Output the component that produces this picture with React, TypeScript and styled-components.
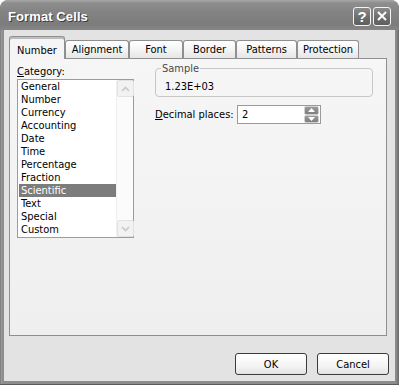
import React from 'react';
import styled, { createGlobalStyle } from 'styled-components';

const GlobalStyle = createGlobalStyle`
  html, body { margin: 0; padding: 0; background: #ffffff; }
  body {
    font-family: "DejaVu Sans Condensed", "Liberation Sans", sans-serif;
    font-size: 11px;
    color: #000;
  }
  * { box-sizing: border-box; }
`;

const Window = styled.div`
  width: 399px;
  height: 385px;
  display: flex;
  flex-direction: column;
  background: linear-gradient(90deg, #6e6e6e 0, #9a9a9a 1px, #8c8c8c 3px, #8c8c8c 396px, #6a6a6a 399px);
  border-radius: 8px 8px 0 0;
  overflow: hidden;
  border-bottom: 1px solid #5a5a5a;
`;

const TitleBar = styled.div`
  height: 30px;
  flex: none;
  display: flex;
  align-items: center;
  padding: 2px 8px 0 8px;
  background: linear-gradient(180deg, #a8a8a8 0, #8e8e8e 3px, #838383 12px, #7c7c7c 24px, #868686 30px);
  border-radius: 8px 8px 0 0;
`;

const Title = styled.div`
  flex: 1;
  font-family: "Liberation Sans", Arial, sans-serif;
  font-weight: bold;
  font-size: 13px;
  color: #ffffff;
  text-shadow: 1px 1px 0 #3c3c3c;
  letter-spacing: 0.1px;
`;

const TitleButtons = styled.div`
  display: flex;
  gap: 2px;
`;

const TitleButton = styled.div`
  width: 18px;
  height: 19px;
  border: 1px solid #f4f4f4;
  border-radius: 3px;
  background: linear-gradient(180deg, #8a8a8a 0, #6c6c6c 60%, #5e5e5e 100%);
  display: flex;
  align-items: center;
  justify-content: center;
  color: #fff;
  font-family: "Liberation Sans", Arial, sans-serif;
  font-weight: bold;
  font-size: 15px;
`;

const Body = styled.div`
  flex: 1;
  margin: 0 4px 3px 4px;
  background: #e3e3e3;
  display: flex;
  flex-direction: column;
  padding-top: 6px;
`;

const TabStrip = styled.div`
  height: 23px;
  display: flex;
  align-items: flex-end;
  padding-left: 5px;
`;

const Tab = styled.div<{ $w: number; $active?: boolean }>`
  position: relative;
  z-index: ${p => (p.$active ? 2 : 1)};
  width: ${p => p.$w}px;
  height: ${p => (p.$active ? 23 : 18)}px;
  margin-bottom: ${p => (p.$active ? 0 : 1)}px;
  padding-top: ${p => (p.$active ? 4 : 0)}px;
  display: flex;
  align-items: center;
  justify-content: center;
  border: 1px solid #8f8f8f;
  border-bottom: none;
  border-radius: 3px 3px 0 0;
  background: ${p =>
    p.$active
      ? '#f5f5f5'
      : 'linear-gradient(180deg, #ffffff 0, #f4f4f4 50%, #e6e6e6 100%)'};
  box-shadow: ${p => (p.$active ? 'inset 0 2px 0 #bdbdbd' : 'none')};
`;

const Panel = styled.div`
  margin: -1px 8px 0 5px;
  height: 278px;
  border: 1px solid #8f8f8f;
  background: linear-gradient(180deg, #f6f6f6 0, #efefef 100%);
  display: flex;
  padding: 3px 0 0 7px;
  gap: 21px;
`;

const LeftColumn = styled.div`
  width: 117px;
  display: flex;
  flex-direction: column;
  padding-top: 3px;
`;

const Label = styled.div`
  line-height: 13px;
  height: 13px;
  white-space: nowrap;
`;

const ListBox = styled.div`
  margin-top: 1px;
  height: 159px;
  border: 1px solid #9c9c9c;
  background: #ffffff;
  display: flex;
`;

const ListItems = styled.div`
  flex: 1;
  padding-left: 1px;
`;

const ListItem = styled.div<{ $selected?: boolean }>`
  height: 13px;
  line-height: 13px;
  padding-left: 2px;
  white-space: nowrap;
  background: ${p => (p.$selected ? '#7c7c7c' : 'transparent')};
  color: ${p => (p.$selected ? '#ffffff' : '#000000')};
`;

const ScrollBar = styled.div`
  width: 17px;
  display: flex;
  flex-direction: column;
  justify-content: space-between;
  background: #fbfbfb;
  border-left: 1px solid #f0f0f0;
`;

const ScrollButton = styled.div`
  width: 17px;
  height: 17px;
  border: 1px solid #e2e2e2;
  border-radius: 2px;
  background: #f2f2f2;
  display: flex;
  align-items: center;
  justify-content: center;
`;

const RightColumn = styled.div`
  width: 218px;
  display: flex;
  flex-direction: column;
`;

const GroupBox = styled.fieldset`
  margin: 0;
  padding: 5px 4px 3px 9px;
  border: 1px solid #c6c6c6;
  border-radius: 4px;
  min-width: 0;
`;

const GroupLegend = styled.legend`
  margin-left: -4px;
  padding: 0 1px;
  line-height: 13px;
  color: #4a4a4a;
`;

const SampleValue = styled.div`
  line-height: 13px;
  height: 13px;
`;

const FieldRow = styled.div`
  margin-top: 8px;
  display: flex;
  align-items: center;
`;

const FieldLabel = styled.div`
  width: 82px;
  line-height: 13px;
  white-space: nowrap;
`;

const SpinInput = styled.div`
  width: 84px;
  height: 19px;
  border: 1px solid #9a9a9a;
  background: #ffffff;
  display: flex;
  align-items: center;
  padding: 0 1px 0 4px;
`;

const SpinValue = styled.div`
  flex: 1;
  line-height: 13px;
`;

const SpinButtons = styled.div`
  width: 15px;
  height: 17px;
  display: flex;
  flex-direction: column;
`;

const SpinHalf = styled.div`
  flex: 1;
  border: 1px solid #d0d0d0;
  border-radius: 2px;
  background: linear-gradient(180deg, #9a9a9a 0, #7e7e7e 100%);
  display: flex;
  align-items: center;
  justify-content: center;
`;

const ButtonRow = styled.div`
  display: flex;
  justify-content: flex-end;
  gap: 10px;
  margin-top: 17px;
  padding-right: 6px;
`;

const DialogButton = styled.div`
  width: 72px;
  height: 22px;
  border: 1px solid #3a3a3a;
  border-radius: 3px;
  background: linear-gradient(180deg, #ffffff 0, #f4f4f4 60%, #e2e2e2 100%);
  display: flex;
  align-items: center;
  justify-content: center;
`;

const tabs = [
  { label: 'Number', w: 56, active: true },
  { label: 'Alignment', w: 64 },
  { label: 'Font', w: 54 },
  { label: 'Border', w: 53 },
  { label: 'Patterns', w: 61 },
  { label: 'Protection', w: 62 },
];

const categories = [
  'General',
  'Number',
  'Currency',
  'Accounting',
  'Date',
  'Time',
  'Percentage',
  'Fraction',
  'Scientific',
  'Text',
  'Special',
  'Custom',
];

const Chevron = ({ up, color, size = 9 }: { up?: boolean; color: string; size?: number }) => (
  <svg width={size} height={6} viewBox="0 0 9 6">
    <polyline
      points={up ? '1,5 4.5,1.5 8,5' : '1,1 4.5,4.5 8,1'}
      fill="none"
      stroke={color}
      strokeWidth={1.6}
    />
  </svg>
);

const SpinArrow = ({ up }: { up?: boolean }) => (
  <svg width={7} height={4} viewBox="0 0 7 4">
    <polygon points={up ? '0,4 3.5,0 7,4' : '0,0 3.5,4 7,0'} fill="#ffffff" />
  </svg>
);

export default function App() {
  return (
    <>
      <GlobalStyle />
      <Window>
        <TitleBar>
          <Title>Format Cells</Title>
          <TitleButtons>
            <TitleButton>?</TitleButton>
            <TitleButton>
              <svg width={10} height={10} viewBox="0 0 10 10">
                <path d="M1 1 L9 9 M9 1 L1 9" stroke="#fff" strokeWidth={2} />
              </svg>
            </TitleButton>
          </TitleButtons>
        </TitleBar>
        <Body>
          <TabStrip>
            {tabs.map(t => (
              <Tab key={t.label} $w={t.w} $active={t.active}>
                {t.label}
              </Tab>
            ))}
          </TabStrip>
          <Panel>
            <LeftColumn>
              <Label>
                <u>C</u>ategory:
              </Label>
              <ListBox>
                <ListItems>
                  {categories.map(c => (
                    <ListItem key={c} $selected={c === 'Scientific'}>
                      {c}
                    </ListItem>
                  ))}
                </ListItems>
                <ScrollBar>
                  <ScrollButton>
                    <Chevron up color="#c8c8c8" />
                  </ScrollButton>
                  <ScrollButton>
                    <Chevron color="#c8c8c8" />
                  </ScrollButton>
                </ScrollBar>
              </ListBox>
            </LeftColumn>
            <RightColumn>
              <GroupBox>
                <GroupLegend>Sample</GroupLegend>
                <SampleValue>1.23E+03</SampleValue>
              </GroupBox>
              <FieldRow>
                <FieldLabel>
                  <u>D</u>ecimal places:
                </FieldLabel>
                <SpinInput>
                  <SpinValue>2</SpinValue>
                  <SpinButtons>
                    <SpinHalf>
                      <SpinArrow up />
                    </SpinHalf>
                    <SpinHalf>
                      <SpinArrow />
                    </SpinHalf>
                  </SpinButtons>
                </SpinInput>
              </FieldRow>
            </RightColumn>
          </Panel>
          <ButtonRow>
            <DialogButton>OK</DialogButton>
            <DialogButton>Cancel</DialogButton>
          </ButtonRow>
        </Body>
      </Window>
    </>
  );
}
